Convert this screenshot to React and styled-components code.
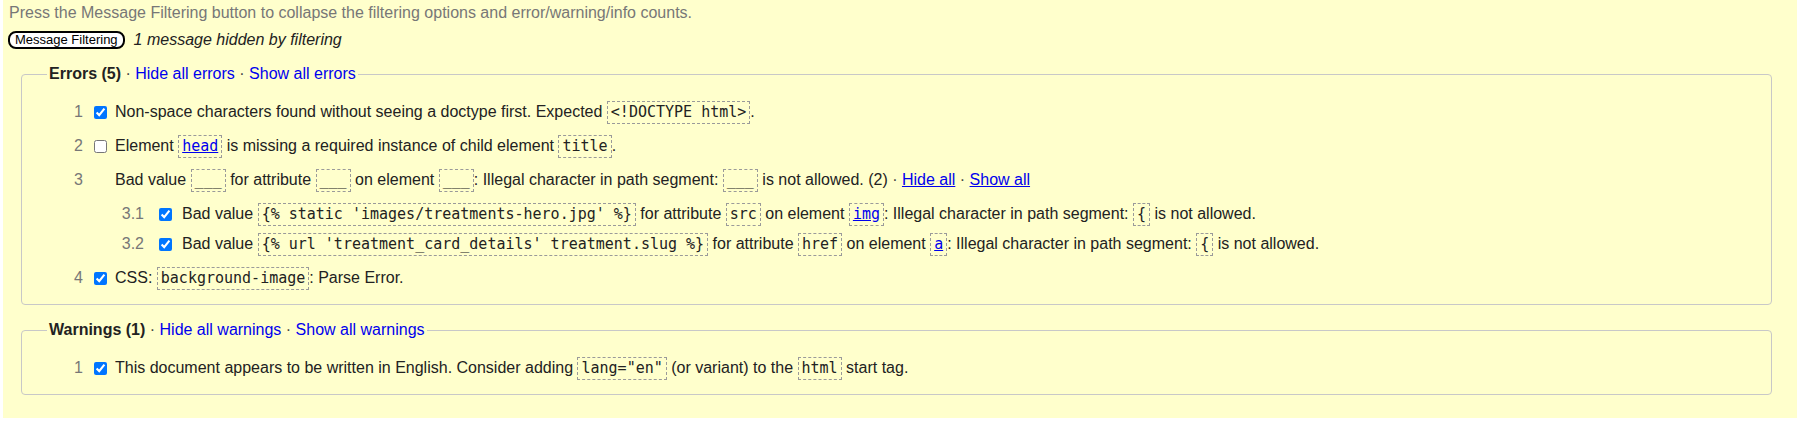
import React from "react";
import styled, { createGlobalStyle } from "styled-components";

const GlobalStyle = createGlobalStyle`
  body {
    margin: 0;
    background: #fff;
    font-family: "Liberation Sans", Arial, sans-serif;
  }
`;

const Page = styled.div`
  margin-left: 3px;
  padding: 3px 0 23px;
  background: #ffffcc;
  color: #222;
  font-size: 16px;
`;

const Intro = styled.p`
  margin: 0;
  padding-left: 6px;
  line-height: 20px;
  color: #777;
`;

const FilterRow = styled.div`
  display: flex;
  align-items: center;
  gap: 9px;
  margin: 8px 0 0 5px;
`;

const FilterButton = styled.button`
  height: 18px;
  padding: 0 5px;
  border: 2px solid #000;
  border-radius: 8px;
  background: #fff;
  color: #000;
  font-family: "Liberation Sans", Arial, sans-serif;
  font-size: 13px;
  line-height: 14px;
`;

const HiddenNote = styled.span`
  font-style: italic;
  line-height: 18px;
`;

const Group = styled.fieldset`
  margin: 15px 25px 0 18px;
  padding: 15px 0 13px 25px;
  min-width: 0;
  border: 1px solid #c8c8c8;
  border-radius: 4px;
`;

const Legend = styled.legend`
  padding: 0 2px;
  line-height: 20px;
`;

const LegendTitle = styled.strong`
  font-weight: bold;
`;

const Sep = styled.span`
  color: #444;
`;

const Action = styled.a`
  color: #0000ee;
  text-decoration: ${(p) => (p.$underline ? "underline" : "none")};
  cursor: pointer;
`;

const List = styled.ul`
  list-style: none;
  margin: 0;
  padding: 0 0 0 ${(p) => p.$indent || 0}px;
`;

const Item = styled.li`
  &:not(:first-child) {
    margin-top: ${(p) => (p.$sub ? 4 : 8)}px;
  }
`;

const SubBlock = styled.div`
  margin-top: 8px;
`;

const Row = styled.div`
  display: flex;
  align-items: center;
  min-height: 26px;
`;

const Num = styled.span`
  flex: none;
  width: 36px;
  text-align: right;
  color: #777;
`;

const Check = styled.input.attrs({ type: "checkbox" })`
  flex: none;
  width: 13px;
  height: 13px;
  margin: 0 ${(p) => (p.$sub ? 10 : 8)}px 0 ${(p) => (p.$sub ? 15 : 11)}px;
`;

const NoCheck = styled.span`
  flex: none;
  width: 13px;
  margin: 0 8px 0 11px;
`;

const Msg = styled.span`
  white-space: nowrap;
`;

const Code = styled.code`
  display: inline-block;
  padding: 1px 3px;
  border: 1px dashed #9a9a9a;
  font-family: "DejaVu Sans Mono", "Liberation Mono", monospace;
  font-size: 15px;
  line-height: 19px;
  color: #222;
  vertical-align: baseline;
`;

const CodeLink = styled.a`
  color: #0000ee;
  text-decoration: underline;
`;

const Blank = () => <Code>___</Code>;

export default function App() {
  return (
    <>
      <GlobalStyle />
      <Page>
        <Intro>
          Press the Message Filtering button to collapse the filtering options
          and error/warning/info counts.
        </Intro>
        <FilterRow>
          <FilterButton>Message Filtering</FilterButton>
          <HiddenNote>1 message hidden by filtering</HiddenNote>
        </FilterRow>

        <Group>
          <Legend>
            <LegendTitle>Errors (5)</LegendTitle>
            <Sep> · </Sep>
            <Action>Hide all errors</Action>
            <Sep> · </Sep>
            <Action>Show all errors</Action>
          </Legend>
          <List>
            <Item>
              <Row>
                <Num>1</Num>
                <Check defaultChecked />
                <Msg>
                  Non-space characters found without seeing a doctype first.
                  Expected <Code>{"<!DOCTYPE html>"}</Code>.
                </Msg>
              </Row>
            </Item>
            <Item>
              <Row>
                <Num>2</Num>
                <Check />
                <Msg>
                  Element{" "}
                  <Code>
                    <CodeLink>head</CodeLink>
                  </Code>{" "}
                  is missing a required instance of child element{" "}
                  <Code>title</Code>.
                </Msg>
              </Row>
            </Item>
            <Item>
              <Row>
                <Num>3</Num>
                <NoCheck />
                <Msg>
                  Bad value <Blank /> for attribute <Blank /> on element{" "}
                  <Blank />: Illegal character in path segment: <Blank /> is
                  not allowed. (2) <Sep>·</Sep>{" "}
                  <Action $underline>Hide all</Action> <Sep>·</Sep>{" "}
                  <Action $underline>Show all</Action>
                </Msg>
              </Row>
              <SubBlock>
                <List $indent={61}>
                  <Item $sub>
                    <Row>
                      <Num>3.1</Num>
                      <Check $sub defaultChecked />
                      <Msg>
                        Bad value{" "}
                        <Code>{"{% static 'images/treatments-hero.jpg' %}"}</Code>{" "}
                        for attribute <Code>src</Code> on element{" "}
                        <Code>
                          <CodeLink>img</CodeLink>
                        </Code>
                        : Illegal character in path segment: <Code>{"{"}</Code>{" "}
                        is not allowed.
                      </Msg>
                    </Row>
                  </Item>
                  <Item $sub>
                    <Row>
                      <Num>3.2</Num>
                      <Check $sub defaultChecked />
                      <Msg>
                        Bad value{" "}
                        <Code>
                          {"{% url 'treatment_card_details' treatment.slug %}"}
                        </Code>{" "}
                        for attribute <Code>href</Code> on element{" "}
                        <Code>
                          <CodeLink>a</CodeLink>
                        </Code>
                        : Illegal character in path segment: <Code>{"{"}</Code>{" "}
                        is not allowed.
                      </Msg>
                    </Row>
                  </Item>
                </List>
              </SubBlock>
            </Item>
            <Item>
              <Row>
                <Num>4</Num>
                <Check defaultChecked />
                <Msg>
                  CSS: <Code>background-image</Code>: Parse Error.
                </Msg>
              </Row>
            </Item>
          </List>
        </Group>

        <Group>
          <Legend>
            <LegendTitle>Warnings (1)</LegendTitle>
            <Sep> · </Sep>
            <Action>Hide all warnings</Action>
            <Sep> · </Sep>
            <Action>Show all warnings</Action>
          </Legend>
          <List>
            <Item>
              <Row>
                <Num>1</Num>
                <Check defaultChecked />
                <Msg>
                  This document appears to be written in English. Consider
                  adding <Code>lang="en"</Code> (or variant) to the{" "}
                  <Code>html</Code> start tag.
                </Msg>
              </Row>
            </Item>
          </List>
        </Group>
      </Page>
    </>
  );
}
